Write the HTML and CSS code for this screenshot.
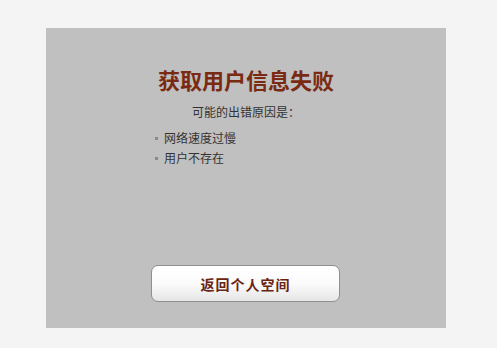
FILE: index.html
```html
<!DOCTYPE html>
<html lang="zh-CN">
<head>
<meta charset="utf-8">
<title>获取用户信息失败</title>
<link rel="stylesheet" href="styles.css">
</head>
<body>
<div class="page">
  <div class="panel">
    <h1 class="title">获取用户信息失败</h1>
    <p class="reason">可能的出错原因是：</p>
    <ul class="list">
      <li>网络速度过慢</li>
      <li>用户不存在</li>
    </ul>
    <div class="actions">
      <a class="btn" href="#">返回个人空间</a>
    </div>
  </div>
</div>
</body>
</html>
```
FILE: styles.css
```css
html, body {
  margin: 0;
  padding: 0;
  background: #f4f4f4;
}
.page {
  padding: 28px 0 0 46px;
}
.panel {
  width: 400px;
  height: 300px;
  background: #c0c0c0;
  box-sizing: border-box;
  padding-top: 37px;
  display: flex;
  flex-direction: column;
  font-family: "Noto Sans CJK SC", "Liberation Sans", sans-serif;
  color: #333;
}
.title {
  margin: 0;
  text-align: center;
  font-size: 22px;
  line-height: 29px;
  font-weight: bold;
  color: #7a2a12;
}
.reason {
  margin: 8px 0 0 0;
  text-align: center;
  font-size: 12px;
  line-height: 20px;
}
.list {
  list-style: none;
  margin: 6px 0 0 109px;
  padding: 0;
  font-size: 12px;
  line-height: 20px;
}
.list li {
  display: flex;
  align-items: center;
  gap: 6px;
}
.list li::before {
  content: "";
  width: 3px;
  height: 3px;
  background: #8a8a8a;
}
.actions {
  margin-top: auto;
  margin-bottom: 26px;
  display: flex;
  padding-left: 105px;
}
.btn {
  width: 189px;
  height: 37px;
  box-sizing: border-box;
  border: 1px solid #8f8f8f;
  border-radius: 7px;
  background: linear-gradient(#ffffff 0%, #fbfbfb 50%, #e6e6e6 100%);
  display: flex;
  align-items: center;
  justify-content: center;
  text-decoration: none;
  font-size: 14px;
  font-weight: bold;
  color: #6a2410;
  letter-spacing: 1px;
}
```
